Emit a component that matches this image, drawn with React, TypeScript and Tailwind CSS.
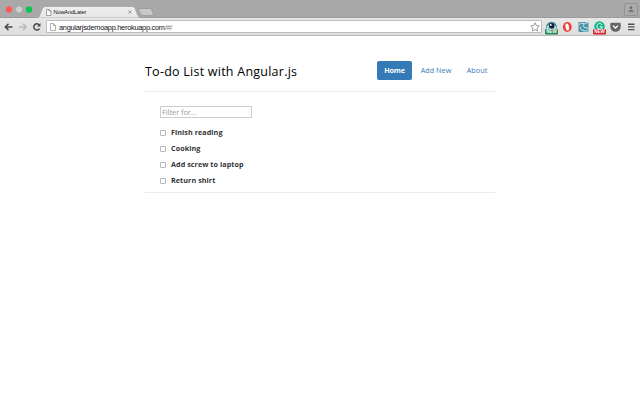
import React from "react";

function PageIcon({ className }: { className: string }) {
  return (
    <svg viewBox="0 0 6 8" className={className} fill="#fff" stroke="currentColor" strokeWidth=".8">
      <path d="M.5.5h3l2 2v5h-5zM3.5.5v2h2" />
    </svg>
  );
}

function TabStrip() {
  return (
    <div className="relative h-[18px] bg-[#a9a9a9]">
      <svg width="640" height="18" className="block">
        <defs>
          <linearGradient id="tab" x1="0" y1="0" x2="0" y2="1">
            <stop offset="0" stopColor="#efefef" />
            <stop offset="1" stopColor="#e7e7e7" />
          </linearGradient>
        </defs>
        <circle cx="9" cy="9.5" r="3.2" fill="#ff5a55" />
        <circle cx="19" cy="9.5" r="3" fill="#cfcfcf" />
        <circle cx="29" cy="9.5" r="3.2" fill="#05c451" />
        <path d="M0 17.5H640" stroke="#9b9b9b" />
        <path d="M36 18c2.500 0 3-1 3.500-2.200l3-7.600Q43.200 6.500 45 6.500H132.500Q134.300 6.500 135 8.200l3 7.600c.5 1.200 1 2.200 3.500 2.200z" fill="url(#tab)" stroke="#969696" strokeWidth=".6" />
        <path d="M139.300 8.500h10.500q1.200 0 1.700 1.200l1.900 4.200q.6 1.500-.8 1.500h-10q-1.500 0-2-1.200l-2-4.400q-.5-1.300.7-1.300z" fill="#c9c9c9" stroke="#8c8c8c" strokeWidth=".6" />
        <path d="m128.400 10.400 3.200 3.200m0-3.200-3.200 3.200" stroke="#888" strokeWidth=".8" />
        <rect x="624.500" y="3.500" width="13" height="12" rx="1.200" fill="#aaa" stroke="#8d8d8d" strokeWidth=".8" />
        <circle cx="631" cy="7.800" r="1.300" fill="#666" />
        <path d="M628 11.800q.5-1.700 3-1.700t3 1.700z" fill="#666" />
      </svg>
      <div className="absolute left-[46px] top-[8px] flex h-2 items-center gap-[2px]">
        <PageIcon className="h-[7px] w-[5.500px] text-[#777]" />
        <span className="text-[5.600px] leading-[8px] tracking-[-0.110px] text-[#111]">NowAndLater</span>
      </div>
    </div>
  );
}

function NewBadge({ x, color }: { x: number; color: string }) {
  return (
    <g>
      <rect x={x} y="29" width="13" height="5.400" rx="1" fill={color} />
      <text x={x + 6.5} y="33.400" textAnchor="middle" fontSize="4.600" fontWeight="700" fill="#fff">NEW</text>
    </g>
  );
}

function Extensions() {
  return (
    <svg width="95" height="18" viewBox="545 18 95 18" className="block shrink-0">
      <circle cx="551.500" cy="27" r="5.300" fill="#3a7f8e" />
      <path d="M546.800 26.500q4.700-5.500 9.400 0v2.500h-9.400" fill="#a9dcea" />
      <circle cx="551.700" cy="26" r="2.700" fill="#13262d" />
      <circle cx="550.800" cy="25" r=".9" fill="#fff" />
      <NewBadge x={545} color="#23864e" />
      <ellipse cx="567.300" cy="27" rx="4.400" ry="4.900" fill="#ef3e36" />
      <ellipse cx="567.300" cy="27" rx="1.800" ry="3.500" fill="#fff" transform="rotate(-10 567.3 27)" />
      <rect x="578.500" y="22" width="10" height="10" fill="#4a95a8" />
      <path d="M588.500 22.500c-4 .3-6 2.500-4.700 4.300 1 1.300 3 .7 4.700 1.700M579 24.500c2-1.500 3.500-1.300 5-1M580 27c1 3.500 4.500 4.500 8 3.800" fill="none" stroke="#d9edf0" strokeWidth="1" />
      <circle cx="599.500" cy="26.500" r="5.200" fill="#16b58b" />
      <path d="M602 25c-2-3-5-1.500-5 1.200s3 4 5 1.800v-1.200h-2.200" fill="none" stroke="#eafff8" strokeWidth="1" />
      <NewBadge x={593} color="#d5232f" />
      <path d="M611.300 22.800h8.400q1 0 1 1v3.200a5.200 4.800 0 0 1-10.400 0v-3.200q0-1 1-1z" fill="#666" />
      <path d="m613 25.600 2.500 2.400 2.500-2.400" fill="none" stroke="#fff" strokeWidth="1.300" />
      <path d="M628 24.200h6.500M628 26.900h6.500M628 29.600h6.500" stroke="#505050" strokeWidth="1.400" />
    </svg>
  );
}

function Toolbar() {
  return (
    <div className="flex h-[18px] items-center border-b border-[#b9b9b9] bg-gradient-to-b from-[#e7e7e7] to-[#dedede]">
      <svg width="46" height="18" className="block shrink-0" fill="none" strokeWidth="1.500">
        <path d="M12.500 9H5.500M8.500 5.800 5.300 9l3.200 3.200" stroke="#484848" />
        <path d="M19 9h7M23 5.800 26.200 9 23 12.200" stroke="#b9b9b9" />
        <path d="M39.300 6.900A3.100 3.100 0 1 0 39.500 10.600" stroke="#484848" />
        <path d="M37 8.400h3.500V5z" fill="#484848" />
      </svg>
      <div className="flex h-[13px] w-[496px] shrink-0 items-center rounded-[1px] border border-[#bdbdbd] bg-white pl-[3px]">
        <PageIcon className="h-2 w-[6px] text-[#999]" />
        <span className="ml-[3px] pt-px text-[7.400px] leading-[11px] tracking-[-0.270px] text-[#111]">
          angularjsdemoapp.herokuapp.com<span className="text-[#777]">/#/</span>
        </span>
        <svg width="10" height="10" viewBox="0 0 10 10" className="ml-auto mr-px" fill="#fff" stroke="#888" strokeWidth=".8">
          <path d="m5 .8 1.250 2.700 3 .4-2.200 2.100.55 3L5 7.500 2.400 9l.55-3L.75 3.900l3-.4z" />
        </svg>
      </div>
      <div className="ml-[3px]"><Extensions /></div>
    </div>
  );
}

const tasks = ["Finish reading", "Cooking", "Add screw to laptop", "Return shirt"];

export default function App() {
  return (
    <div className="h-[400px] w-[640px] overflow-hidden bg-white font-['Liberation_Sans',sans-serif]">
      <TabStrip />
      <Toolbar />
      <main className="ml-[145px] w-[350px] font-['Open_Sans','Noto_Sans',sans-serif]">
        <header className="flex h-14 justify-between border-b border-[#ececec] pt-[25px]">
          <h1 className="whitespace-nowrap text-[12.500px] font-medium leading-[21px] tracking-[0.240px] text-black">To-do List with Angular.js</h1>
          <nav className="flex h-[19px] text-[7.200px] leading-[19px] text-[#337ab7]">
            <a className="w-[35px] rounded-[2px] bg-[#337ab7] text-center font-bold tracking-[-0.150px] text-white">Home</a>
            <a className="ml-px w-[46px] text-center font-medium tracking-[0.060px]">Add New</a>
            <a className="w-[36px] text-center font-medium tracking-[0.060px]">About</a>
          </nav>
        </header>
        <section className="h-[101px] border-b border-[#ececec] pl-[15px] pt-[14px]">
          <input placeholder="Filter for..." className="block h-3 w-[92px] border border-[#ccc] px-px text-[7.300px] leading-[10px] placeholder:text-[#999]" />
          <ul className="mt-[6px]">
            {tasks.map((task) => (
              <li key={task} className="flex h-4 items-center">
                <span className="mt-px h-[6px] w-[6px] rounded-[1px] border border-[#b5b5b5] bg-white" />
                <span className="ml-[5px] text-[7.200px] font-bold leading-4 tracking-[0.065px] text-[#333]">{task}</span>
              </li>
            ))}
          </ul>
        </section>
      </main>
    </div>
  );
}
